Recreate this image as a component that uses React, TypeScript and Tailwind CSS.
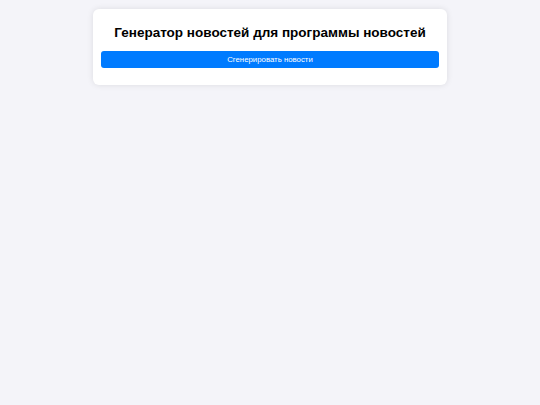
export default function App() {
  return (
    <div className="min-h-screen bg-[#f4f4f9] pt-[9px] font-['Liberation_Sans',Arial,sans-serif]">
      <div className="mx-auto w-[354px] rounded-[6px] bg-white px-2 pt-[14px] pb-[17px] shadow-[0_0_6px_rgba(0,0,0,0.1)]">
        <h1 className="whitespace-nowrap text-center text-[13.5px] font-bold leading-[20px] text-black">
          Генератор новостей для программы новостей
        </h1>
        <button className="mt-[8px] block h-[17px] w-full rounded-[3px] bg-[#007bff] text-[7.8px] leading-[17px] text-white">
          Сгенерировать новости
        </button>
      </div>
    </div>
  );
}
